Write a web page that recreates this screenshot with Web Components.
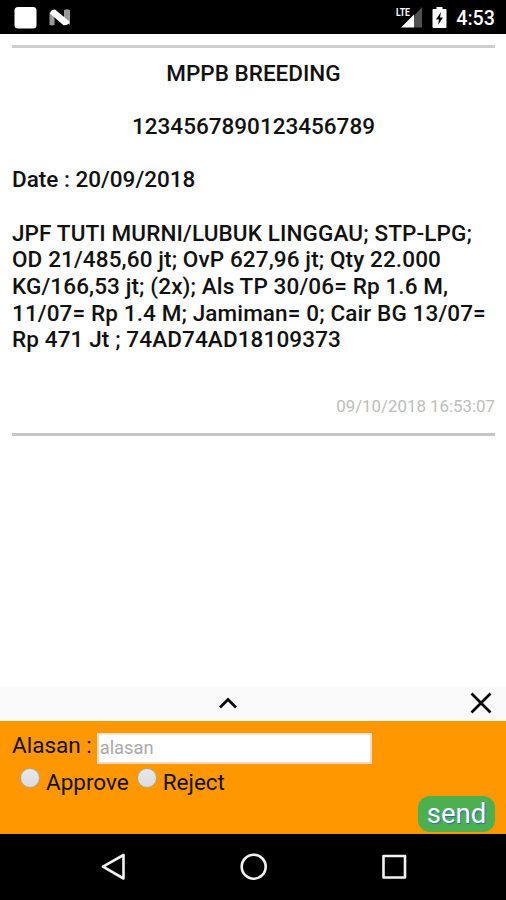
<!DOCTYPE html>
<html lang="id">
<head>
<meta charset="utf-8">
<meta name="viewport" content="width=device-width, initial-scale=1">
<title>MPPB Breeding</title>
<style>
  html, body {
    margin: 0;
    height: 100%;
    overflow: hidden;
  }
  body {
    font-family: Roboto, "Noto Sans", sans-serif;
    font-size: 22.5px;
    color: #111;
    background-color: #fff;
  }
</style>
</head>
<body>
<phone-screen>
  <status-bar slot="status" time="4:53"></status-bar>
  <message-card heading="MPPB BREEDING" number="1234567890123456789" date="20/09/2018" stamp="09/10/2018 16:53:07">JPF TUTI MURNI/LUBUK LINGGAU; STP-LPG;<br>OD 21/485,60 jt; OvP 627,96 jt; Qty 22.000<br>KG/166,53 jt; (2x); Als TP 30/06= Rp 1.6 M,<br>11/07= Rp 1.4 M; Jamiman= 0; Cair BG 13/07=<br>Rp 471 Jt ; 74AD74AD18109373</message-card>
  <sheet-header slot="footer"></sheet-header>
  <approval-form slot="footer"></approval-form>
  <nav-bar slot="footer"></nav-bar>
</phone-screen>

<script>
class PhoneScreen extends HTMLElement {
  constructor() {
    super();
    this.attachShadow({ mode: "open" });
    this.shadowRoot.innerHTML = `
      <style>
        :host {
          display: flex;
          flex-direction: column;
          height: 100vh;
        }
        main {
          flex: 1;
          min-height: 0;
        }
      </style>
      <slot name="status"></slot>
      <main><slot></slot></main>
      <slot name="footer"></slot>
    `;
  }
}

class StatusBar extends HTMLElement {
  constructor() {
    super();
    this.attachShadow({ mode: "open" });
    this.shadowRoot.innerHTML = `
      <style>
        :host {
          display: flex;
          justify-content: space-between;
          box-sizing: border-box;
          height: 34px;
          padding: 0 11px 0 0;
          background-color: #000;
          color: #fff;
        }
        svg { display: block; }
        .right { display: flex; }
        .time {
          font-size: 19.7px;
          font-weight: 500;
          line-height: 37px;
          margin-left: 9px;
        }
        .lte {
          font: 700 11.5px Roboto, sans-serif;
        }
      </style>
      <svg width="80" height="34" viewBox="0 0 80 34">
        <rect x="14.5" y="7" width="22" height="21.5" rx="3.5" fill="#fff"/>
        <path d="M49.5 12l5 5v8q-3 .8-5 0zM70 25l-6-5V10q3-1.500 6 0z" fill="#999"/>
        <path d="M50 13.500Q50.500 9.500 55 9.500L69.500 21.500Q69 25.500 63.500 25.300z" fill="#fff"/>
      </svg>
      <div class="right">
        <svg width="52" height="34" viewBox="395 0 52 34">
          <path d="M422 7v20.500h-8V16z" fill="#505050"/>
          <path d="M414 14.500v13h-13z" fill="#fff"/>
          <text class="lte" x="396" y="16" fill="#fff" textLength="14" lengthAdjust="spacingAndGlyphs">LTE</text>
          <path d="M433.500 9h3V7h6v2h3q1 0 1 1v17q0 1-1 1h-12q-1 0-1-1V10q0-1 1-1z" fill="#fff"/>
          <path d="M441 12l-5 7.500h3l-1 5.500 5-7.500h-3z" fill="#000"/>
        </svg>
        <span class="time"></span>
      </div>
    `;
  }

  connectedCallback() {
    this.shadowRoot.querySelector(".time").textContent = this.getAttribute("time");
  }
}

class MessageCard extends HTMLElement {
  constructor() {
    super();
    this.attachShadow({ mode: "open" });
    this.shadowRoot.innerHTML = `
      <style>
        :host {
          display: block;
          margin: 10.500px 11px 0 12px;
          border-top: 3px solid #cecece;
          border-bottom: 3px solid #c6c6c6;
          height: 385px;
          font-weight: 500;
          line-height: 26.700px;
          white-space: nowrap;
        }
        .center { text-align: center; }
        .heading { padding-top: 12px; }
        .gap { margin-top: 26.700px; }
        .body { letter-spacing: 0.120px; }
        .stamp {
          margin-top: 39.500px;
          font-size: 16.850px;
          font-weight: 400;
          color: #bdbdbd;
          text-align: right;
        }
      </style>
      <div class="center heading"></div>
      <div class="center gap number"></div>
      <div class="gap date"></div>
      <div class="gap body"><slot></slot></div>
      <div class="stamp"></div>
    `;
  }

  connectedCallback() {
    const root = this.shadowRoot;
    root.querySelector(".heading").textContent = this.getAttribute("heading");
    root.querySelector(".number").textContent = this.getAttribute("number");
    root.querySelector(".date").textContent = `Date : ${this.getAttribute("date")}`;
    root.querySelector(".stamp").textContent = this.getAttribute("stamp");
  }
}

class SheetHeader extends HTMLElement {
  constructor() {
    super();
    this.attachShadow({ mode: "open" });
    this.shadowRoot.innerHTML = `
      <style>
        :host {
          display: flex;
          align-items: center;
          justify-content: space-between;
          box-sizing: border-box;
          height: 35px;
          padding: 0 14px 2px 218px;
          background-color: #fafafa;
        }
        svg {
          display: block;
          fill: none;
          stroke: #080808;
          stroke-width: 2.700;
        }
      </style>
      <svg width="20" height="14" viewBox="0 0 20 14"><path d="M2 11.500l8-8 8 8"/></svg>
      <svg width="22" height="22" viewBox="0 0 22 22"><path d="M1.500 1.500l19 19M20.500 1.500l-19 19"/></svg>
    `;
  }
}

class ApprovalForm extends HTMLElement {
  constructor() {
    super();
    this.attachShadow({ mode: "open" });
    this.shadowRoot.innerHTML = `
      <style>
        :host {
          display: block;
          box-sizing: border-box;
          height: 113px;
          padding: 12px 11px 0 12px;
          background-color: #ff9800;
        }
        .row {
          display: flex;
          line-height: 24px;
        }
        input[type=text] {
          box-sizing: border-box;
          width: 275px;
          height: 31px;
          margin: 0 0 0 5px;
          padding: 0 1px 3px;
          border: 2px solid #f6d9c4;
          border-top-color: #ffe6cc;
          border-radius: 0;
          background-color: #fff;
          font: 18.300px Roboto, sans-serif;
        }
        input::placeholder { color: #a9a9a9; }
        .options {
          height: 28px;
          margin-top: 4px;
          padding-left: 8px;
        }
        input[type=radio] {
          appearance: none;
          box-sizing: border-box;
          width: 20px;
          height: 20px;
          margin: 0 6px 0 0;
          border: 1px solid #b0a595;
          border-radius: 50%;
          background: linear-gradient(#e8e8e8, #dcdcdc);
        }
        label { display: flex; }
        label + label { margin-left: 8px; }
        .actions {
          display: flex;
          justify-content: flex-end;
        }
        button {
          width: 77px;
          height: 36px;
          padding: 0;
          border: 0;
          border-radius: 12px;
          background-color: #4caf50;
          color: #fff;
          font: 27.500px/36px Roboto, sans-serif;
          text-shadow: 1px 1px 1px #2467c4;
        }
        .text { padding-top: 2px; }
      </style>
      <div class="row">
        <span>Alasan :</span>
        <input type="text" placeholder="alasan">
      </div>
      <div class="row options">
        <label><input type="radio" name="decision"><span class="text">Approve</span></label>
        <label><input type="radio" name="decision"><span class="text">Reject</span></label>
      </div>
      <div class="actions"><button type="button">send</button></div>
    `;
  }
}

class NavBar extends HTMLElement {
  constructor() {
    super();
    this.attachShadow({ mode: "open" });
    this.shadowRoot.innerHTML = `
      <style>
        :host {
          display: flex;
          justify-content: space-between;
          box-sizing: border-box;
          height: 66px;
          padding: 17px 97px 0 99px;
          background-color: #000;
        }
        svg {
          fill: none;
          stroke: #f2f2f2;
          stroke-width: 2.600;
          stroke-linejoin: round;
        }
      </style>
      <svg width="30" height="30" viewBox="0 0 30 30"><path d="M24.500 4v23.500L4 15.700z"/></svg>
      <svg width="30" height="30" viewBox="0 0 30 30"><circle cx="14.700" cy="15.700" r="12"/></svg>
      <svg width="30" height="30" viewBox="0 0 30 30"><rect x="4.500" y="5" width="21.500" height="21.500"/></svg>
    `;
  }
}

customElements.define("phone-screen", PhoneScreen);
customElements.define("status-bar", StatusBar);
customElements.define("message-card", MessageCard);
customElements.define("sheet-header", SheetHeader);
customElements.define("approval-form", ApprovalForm);
customElements.define("nav-bar", NavBar);
</script>
</body>
</html>
